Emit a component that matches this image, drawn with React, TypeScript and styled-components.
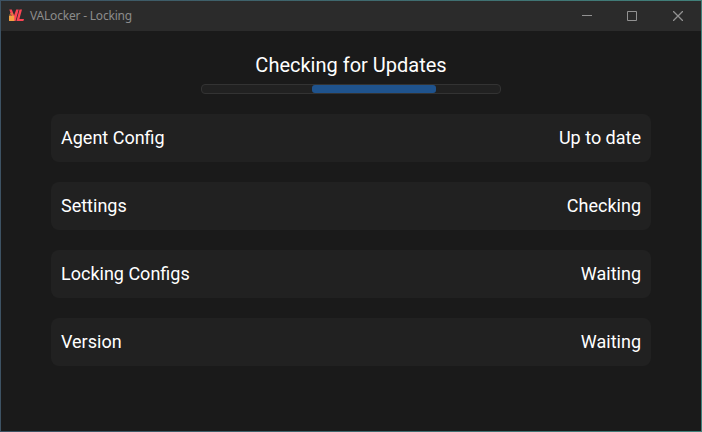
import React from "react";
import styled, { createGlobalStyle } from "styled-components";

const GlobalStyle = createGlobalStyle`
  * { box-sizing: border-box; }
  body { margin: 0; background: #1a1a1a; }
`;

const Window = styled.div`
  width: 702px;
  height: 432px;
  display: flex;
  flex-direction: column;
  border: 1px solid transparent;
  background:
    linear-gradient(#1a1a1a, #1a1a1a) padding-box,
    linear-gradient(to right, #3d5263, #41807a) border-box;
  overflow: hidden;
  font-family: Roboto, sans-serif;
`;

const TitleBar = styled.header`
  height: 30px;
  flex: none;
  display: flex;
  align-items: center;
  padding-left: 8px;
  background: #2b2b2b;
`;

const Title = styled.span`
  flex: 1;
  margin-left: 5px;
  font: 12px/16px "Noto Sans", sans-serif;
  letter-spacing: -0.2px;
  color: #8c8c8c;
`;

const WindowButton = styled.span`
  width: 46px;
  height: 30px;
  display: flex;
  align-items: center;
  justify-content: center;
  color: #929292;
`;

const Content = styled.main`
  display: flex;
  flex-direction: column;
  align-items: center;
  padding: 22px 50px 0;
`;

const Heading = styled.h1`
  margin: 0;
  font-size: 20px;
  line-height: 24px;
  font-weight: 400;
  color: #fff;
`;

const Track = styled.div`
  width: 300px;
  height: 10px;
  margin: 7px 0 20px;
  padding: 0 1px;
  border: 1px solid #333;
  border-radius: 4px;
  background: #212121;
`;

const Bar = styled.div`
  width: 124px;
  height: 8px;
  margin-left: 109px;
  border-radius: 3px;
  background: #1f538d;
`;

const StatusList = styled.div`
  width: 600px;
  display: flex;
  flex-direction: column;
  gap: 20px;
`;

const StatusRow = styled.div`
  height: 48px;
  display: flex;
  align-items: center;
  justify-content: space-between;
  padding: 0 10px;
  border-radius: 8px;
  background: #212121;
  color: #fff;
  font-size: 18px;
  line-height: 24px;
`;

const items = [
  ["Agent Config", "Up to date"],
  ["Settings", "Checking"],
  ["Locking Configs", "Waiting"],
  ["Version", "Waiting"],
];

function Logo() {
  return (
    <svg width="16" height="16" viewBox="0 0 16 16">
      <path d="M.3 1.5h2.5l2.3 6L7.2 1.5h2.5L6.6 13H4.2z" fill="#fa4454" />
      <path d="M10.5 1.5H13L10.4 11H15l-.6 2H7.4z" fill="#fa4454" />
      <path d="M1.1 8V6.7a1.4 1.4 0 0 1 2.8 0V8" fill="none" stroke="#d8923c" />
      <path d="M0 7.8h5.3V13H0z" fill="#f5a142" />
    </svg>
  );
}

export default function App() {
  return (
    <Window>
      <GlobalStyle />
      <TitleBar>
        <Logo />
        <Title>VALocker - Locking</Title>
        <WindowButton>
          <svg width="12" height="10"><path d="M2 4.5h10" stroke="currentColor" /></svg>
        </WindowButton>
        <WindowButton>
          <svg width="10" height="10"><path d="M.5.5h9v9h-9z" fill="none" stroke="currentColor" /></svg>
        </WindowButton>
        <WindowButton>
          <svg width="10" height="10"><path d="M0 0l10 10M10 0L0 10" stroke="currentColor" strokeWidth="1.3" /></svg>
        </WindowButton>
      </TitleBar>
      <Content>
        <Heading>Checking for Updates</Heading>
        <Track><Bar /></Track>
        <StatusList>
          {items.map(([name, status]) => (
            <StatusRow key={name}><span>{name}</span><span>{status}</span></StatusRow>
          ))}
        </StatusList>
      </Content>
    </Window>
  );
}
